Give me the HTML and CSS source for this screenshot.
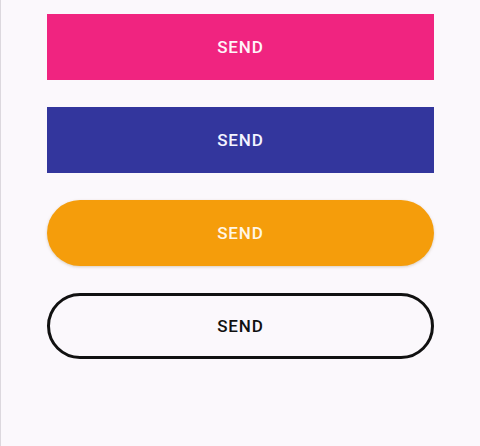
FILE: index.html
```html
<!DOCTYPE html>
<html lang="en">
<head>
<meta charset="utf-8">
<title>Buttons</title>
<link rel="stylesheet" href="styles.css">
</head>
<body>
<main class="screen">
  <div class="stack">
    <button class="btn btn-pink">Send</button>
    <button class="btn btn-indigo">Send</button>
    <button class="btn btn-orange">Send</button>
    <button class="btn btn-outline">Send</button>
  </div>
</main>
</body>
</html>
```
FILE: styles.css
```css
html, body {
  margin: 0;
  padding: 0;
  height: 100%;
}
body {
  background: #fbf8fc;
  font-family: Roboto, "Noto Sans", "Liberation Sans", sans-serif;
}
.screen {
  height: 100%;
  border-left: 1px solid #dcd8de;
  box-sizing: border-box;
  padding: 14px 0 0 46px;
}
.stack {
  width: 387px;
  display: flex;
  flex-direction: column;
  gap: 27px;
}
.btn {
  height: 66px;
  margin: 0;
  border: none;
  padding: 0;
  font-family: inherit;
  font-size: 17px;
  font-weight: 500;
  letter-spacing: 0.9px;
  text-transform: uppercase;
  color: #fff;
  display: flex;
  align-items: center;
  justify-content: center;
  box-sizing: border-box;
}
.btn-pink {
  background: #f02480;
  color: #fff4f9;
}
.btn-indigo {
  background: #33369d;
  color: #f4f4ff;
}
.btn-orange {
  background: #f59d0b;
  color: #fff6e6;
  border-radius: 33px;
  box-shadow: 0 1px 3px rgba(120, 80, 0, 0.25);
}
.btn-outline {
  background: transparent;
  border: 3px solid #111;
  border-radius: 33px;
  color: #111;
}
```
